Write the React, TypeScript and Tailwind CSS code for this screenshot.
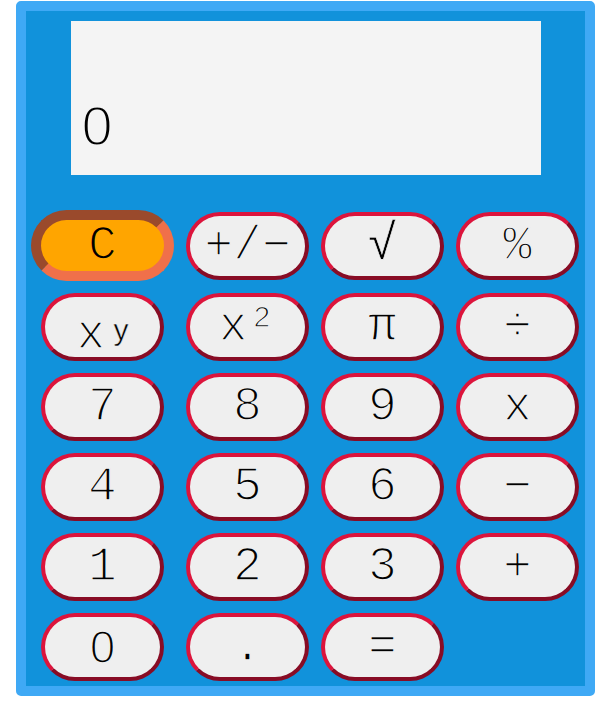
import React from "react";

type Key = { label: React.ReactNode; id: string };

const keys: Key[] = [
  { id: "pm", label: "+/−" },
  { id: "sqrt", label: <span className="text-[50px] [-webkit-text-stroke:0.6px_#efefef]">√</span> },
  { id: "pct", label: "%" },
  {
    id: "pow",
    label: (
      <span className="flex items-end">
        <span className="translate-y-[8px]">x</span>
        <span className="ml-[8px] -translate-y-[6px] text-[30px] font-['Liberation_Sans',sans-serif] [-webkit-text-stroke:0.5px_#efefef]">y</span>
      </span>
    ),
  },
  { id: "sq", label: "x²" },
  { id: "pi", label: "π" },
  { id: "div", label: "÷" },
  { id: "7", label: "7" },
  { id: "8", label: "8" },
  { id: "9", label: "9" },
  { id: "mul", label: "x" },
  { id: "4", label: "4" },
  { id: "5", label: "5" },
  { id: "6", label: "6" },
  { id: "sub", label: "−" },
  { id: "1", label: "1" },
  { id: "2", label: "2" },
  { id: "3", label: "3" },
  { id: "add", label: "+" },
  { id: "0", label: <span className="font-['Liberation_Sans',sans-serif] text-[46px]">0</span> },
  { id: "dot", label: "." },
  { id: "eq", label: "=" },
];

function CalcButton({ label }: { label: React.ReactNode }) {
  return (
    <button className="w-[123px] h-[68px] rounded-full bg-[#efefef] border-4 border-t-[#dc143c] border-l-[#dc143c] border-b-[#880c25] border-r-[#880c25] flex items-center justify-center text-[48px] leading-none text-black font-['Liberation_Mono',monospace] [-webkit-text-stroke:1.6px_#efefef]">
      {label}
    </button>
  );
}

export default function App() {
  return (
    <div className="pl-[16px] pt-[1px]">
      <div className="w-[579px] h-[695px] bg-[#1192db] border-[10px] border-[#3fa9f5] rounded-[5px]">
        <div className="mx-auto mt-[10px] w-[470px] h-[154px] bg-[#f4f4f4] flex items-end pl-[11px] pb-[21px]">
          <span className="text-[56px] leading-none text-black font-['Liberation_Sans',sans-serif] [-webkit-text-stroke:2px_#f4f4f4]">0</span>
        </div>

        <div className="mt-[35px] ml-[5px] grid grid-cols-[143px_123px_123px_123px] grid-rows-[71px_68px_68px_68px_68px_68px] gap-x-[12px] gap-y-[12px] items-center justify-items-center">
          <button className="w-[143px] h-[71px] rounded-full bg-[#ffa500] border-[10px] border-t-[#9a4a2c] border-l-[#9a4a2c] border-b-[#f0704a] border-r-[#f0704a] flex items-center justify-center text-[48px] leading-none text-black font-['Liberation_Mono',monospace] [-webkit-text-stroke:1.6px_#ffa500]">
            C
          </button>
          {keys.map((k) => (
            <CalcButton key={k.id} label={k.label} />
          ))}
        </div>
      </div>
    </div>
  );
}
